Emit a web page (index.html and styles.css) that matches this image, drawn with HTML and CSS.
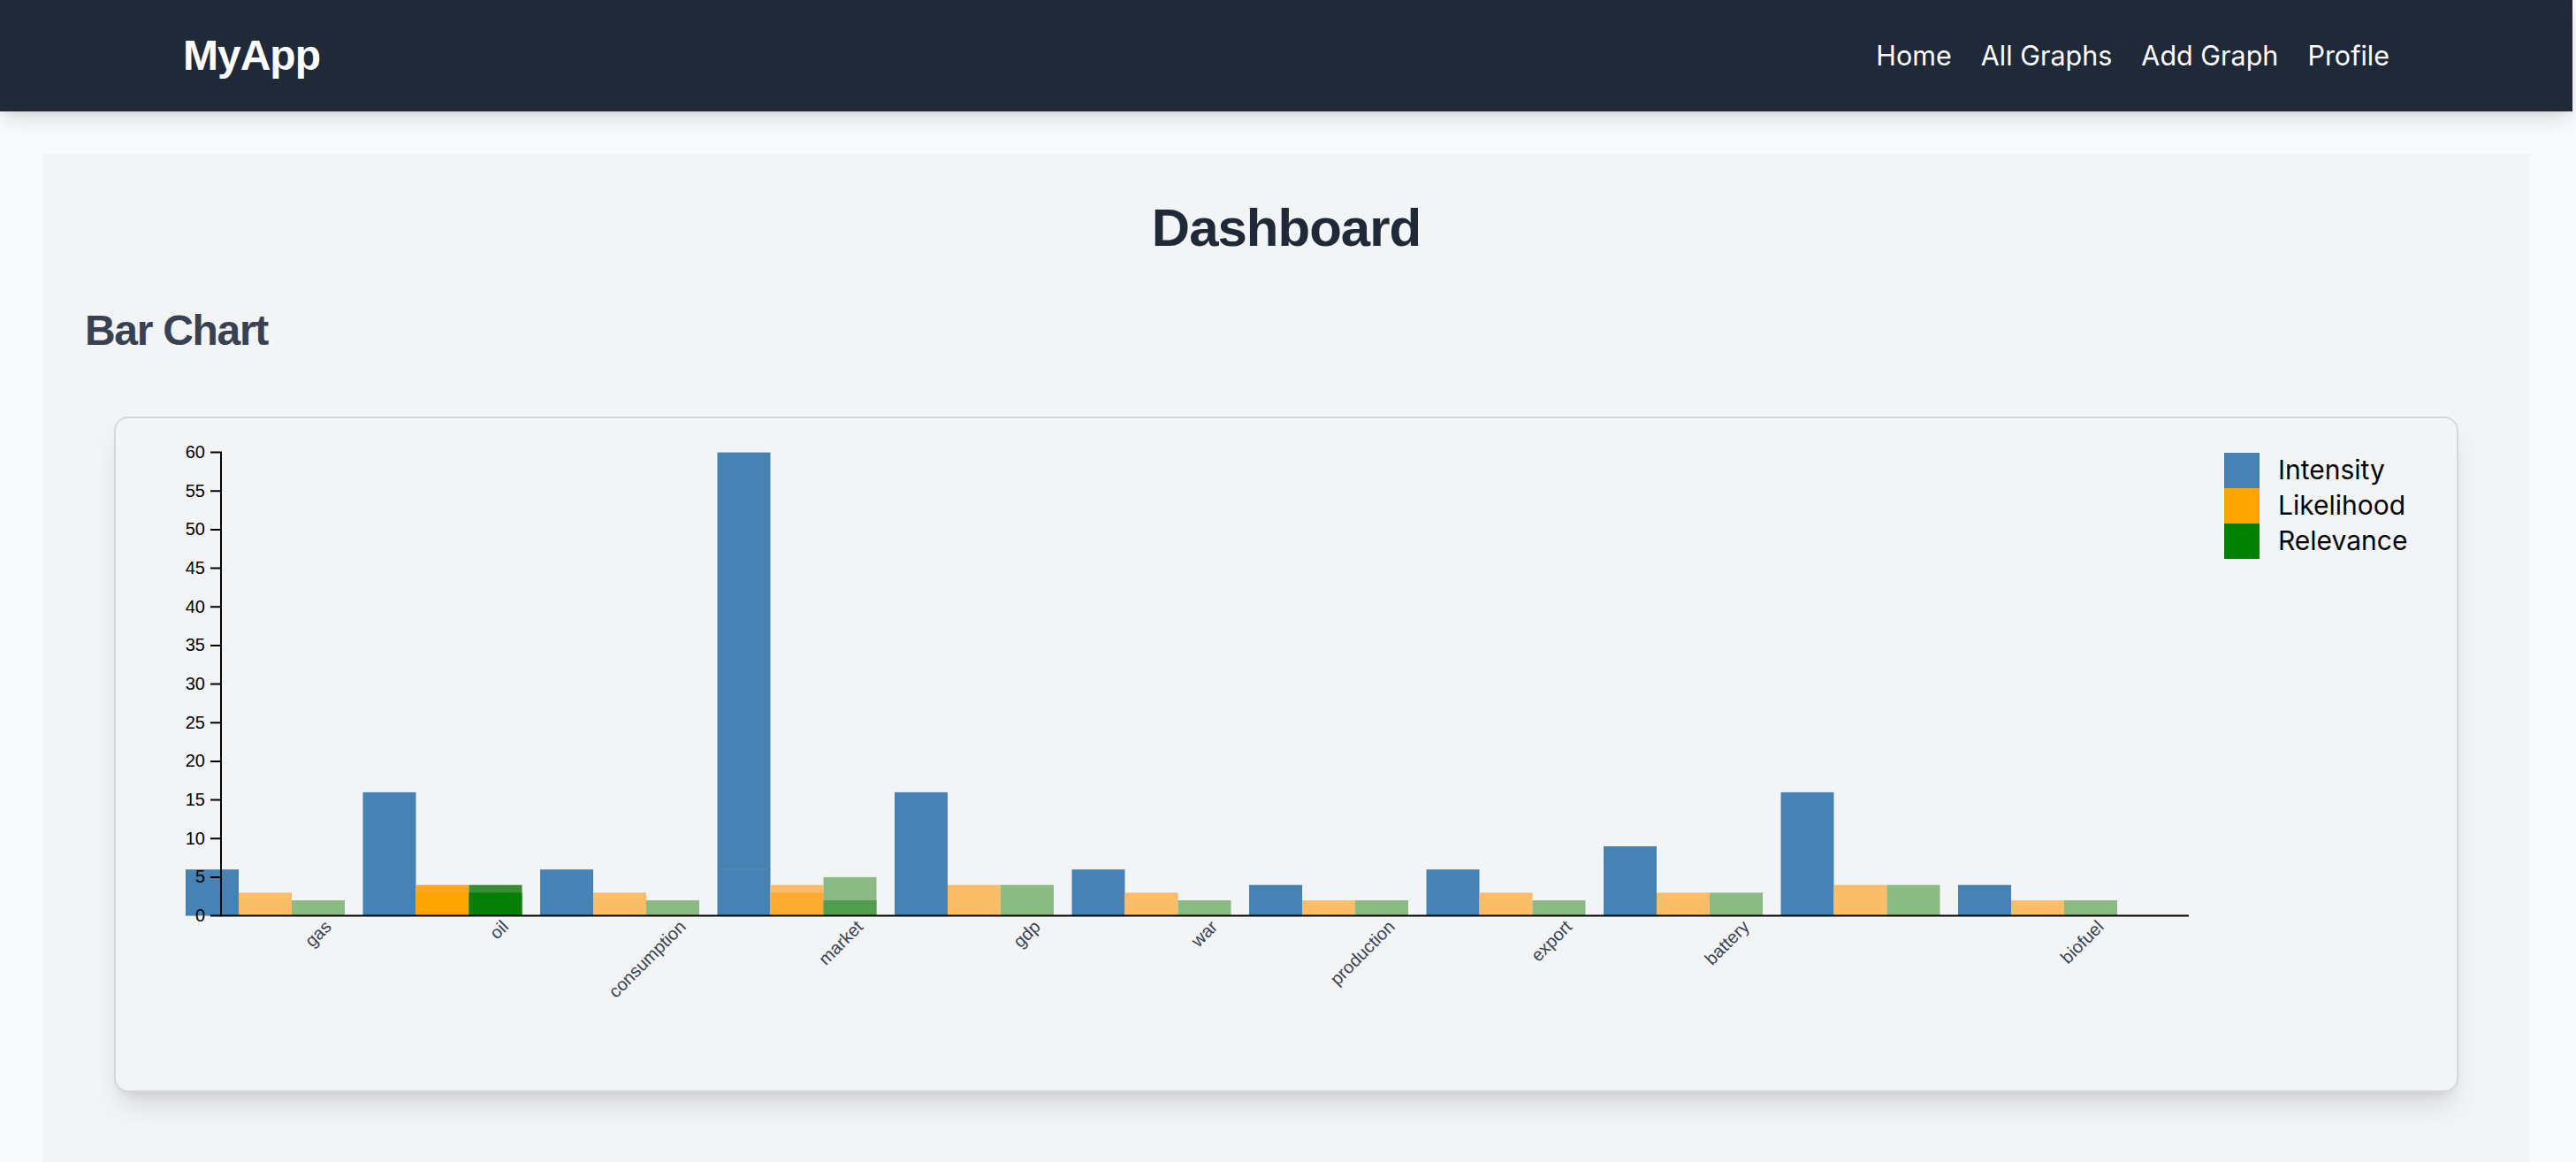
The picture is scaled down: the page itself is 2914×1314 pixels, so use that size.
FILE: index.html
```html
<!DOCTYPE html>
<html lang="en">
<head>
<meta charset="utf-8">
<title>MyApp - Dashboard</title>
<link rel="stylesheet" href="styles.css">
</head>
<body>
<nav class="navbar">
  <div class="nav-inner">
    <a class="brand" href="#">MyApp</a>
    <ul class="nav-links">
      <li><a href="#">Home</a></li>
      <li><a href="#">All Graphs</a></li>
      <li><a href="#">Add Graph</a></li>
      <li><a href="#">Profile</a></li>
    </ul>
  </div>
</nav>
<main class="dashboard">
  <h1 class="page-title">Dashboard</h1>
  <section class="chart-section">
    <h2 class="section-title">Bar Chart</h2>
    <div class="chart-card">
      <svg class="chart" width="2648" height="760" xmlns="http://www.w3.org/2000/svg">
        <g transform="translate(119,38.6)">
          <!-- gas -->
          <rect x="-40" y="471.6" width="60" height="52.4" fill="#4682b4"/>
          <rect x="20" y="497.8" width="60" height="26.2" fill="#fbbd68"/>
          <rect x="80" y="506.5" width="60" height="17.5" fill="#8cba85"/>
          <!-- oil -->
          <rect x="160.5" y="384.3" width="60" height="139.7" fill="#4682b4"/>
          <rect x="220.5" y="489.1" width="60" height="34.9" fill="#ffa81c"/>
          <rect x="220.5" y="497.8" width="60" height="26.2" fill="#ffa500"/>
          <rect x="280.5" y="489.1" width="60" height="34.9" fill="#3a8c35"/>
          <rect x="280.5" y="497.8" width="60" height="26.2" fill="#057f05"/>
          <!-- consumption -->
          <rect x="361" y="471.6" width="60" height="52.4" fill="#4682b4"/>
          <rect x="421" y="497.8" width="60" height="26.2" fill="#fbbd68"/>
          <rect x="481" y="506.5" width="60" height="17.5" fill="#8cba85"/>
          <!-- market -->
          <rect x="561.5" y="0" width="60" height="524" fill="#4682b4"/>
          <rect x="561.5" y="471.6" width="60" height="1" fill="#5089b9"/>
          <rect x="621.5" y="489.1" width="60" height="34.9" fill="#fbbd68"/>
          <rect x="621.5" y="497.8" width="60" height="26.2" fill="#ffab2f"/>
          <rect x="681.5" y="480.3" width="60" height="43.7" fill="#8cba85"/>
          <rect x="681.5" y="506.5" width="60" height="17.5" fill="#539d4f"/>
          <!-- gdp -->
          <rect x="762" y="384.3" width="60" height="139.7" fill="#4682b4"/>
          <rect x="822" y="489.1" width="60" height="34.9" fill="#fbbd68"/>
          <rect x="882" y="489.1" width="60" height="34.9" fill="#8cba85"/>
          <!-- war -->
          <rect x="962.5" y="471.6" width="60" height="52.4" fill="#4682b4"/>
          <rect x="1022.5" y="497.8" width="60" height="26.2" fill="#fbbd68"/>
          <rect x="1082.5" y="506.5" width="60" height="17.5" fill="#8cba85"/>
          <!-- production -->
          <rect x="1163" y="489.1" width="60" height="34.9" fill="#4682b4"/>
          <rect x="1223" y="506.5" width="60" height="17.5" fill="#fbbd68"/>
          <rect x="1283" y="506.5" width="60" height="17.5" fill="#8cba85"/>
          <!-- export -->
          <rect x="1363.5" y="471.6" width="60" height="52.4" fill="#4682b4"/>
          <rect x="1423.5" y="497.8" width="60" height="26.2" fill="#fbbd68"/>
          <rect x="1483.5" y="506.5" width="60" height="17.5" fill="#8cba85"/>
          <!-- battery -->
          <rect x="1564" y="445.4" width="60" height="78.6" fill="#4682b4"/>
          <rect x="1624" y="497.8" width="60" height="26.2" fill="#fbbd68"/>
          <rect x="1684" y="497.8" width="60" height="26.2" fill="#8cba85"/>
          <!-- (blank) -->
          <rect x="1764.5" y="384.3" width="60" height="139.7" fill="#4682b4"/>
          <rect x="1824.5" y="489.1" width="60" height="34.9" fill="#fbbd68"/>
          <rect x="1884.5" y="489.1" width="60" height="34.9" fill="#8cba85"/>
          <!-- biofuel -->
          <rect x="1965" y="489.1" width="60" height="34.9" fill="#4682b4"/>
          <rect x="2025" y="506.5" width="60" height="17.5" fill="#fbbd68"/>
          <rect x="2085" y="506.5" width="60" height="17.5" fill="#8cba85"/>

          <!-- x axis -->
          <g class="x-axis">
            <path d="M0,524 H2226" class="axis-line"/>
            <text class="x-label" transform="translate(126,537.6) rotate(-45)">gas</text>
            <text class="x-label" transform="translate(326.5,537.6) rotate(-45)">oil</text>
            <text class="x-label" transform="translate(527,537.6) rotate(-45)">consumption</text>
            <text class="x-label" transform="translate(727.5,537.6) rotate(-45)">market</text>
            <text class="x-label" transform="translate(928,537.6) rotate(-45)">gdp</text>
            <text class="x-label" transform="translate(1128.5,537.6) rotate(-45)">war</text>
            <text class="x-label" transform="translate(1329,537.6) rotate(-45)">production</text>
            <text class="x-label" transform="translate(1529.5,537.6) rotate(-45)">export</text>
            <text class="x-label" transform="translate(1730,537.6) rotate(-45)">battery</text>
            <text class="x-label" transform="translate(2131,537.6) rotate(-45)">biofuel</text>
          </g>

          <!-- y axis -->
          <g class="y-axis">
            <path d="M-12,0 H0 V524 H-12" class="axis-line"/>
            <path d="M-12,43.67 H0 M-12,87.33 H0 M-12,131 H0 M-12,174.67 H0 M-12,218.33 H0 M-12,262 H0 M-12,305.67 H0 M-12,349.33 H0 M-12,393 H0 M-12,436.67 H0 M-12,480.33 H0" class="axis-line"/>
            <text class="y-label" x="-18" y="524" dy="0.32em">0</text>
            <text class="y-label" x="-18" y="480.33" dy="0.32em">5</text>
            <text class="y-label" x="-18" y="436.67" dy="0.32em">10</text>
            <text class="y-label" x="-18" y="393" dy="0.32em">15</text>
            <text class="y-label" x="-18" y="349.33" dy="0.32em">20</text>
            <text class="y-label" x="-18" y="305.67" dy="0.32em">25</text>
            <text class="y-label" x="-18" y="262" dy="0.32em">30</text>
            <text class="y-label" x="-18" y="218.33" dy="0.32em">35</text>
            <text class="y-label" x="-18" y="174.67" dy="0.32em">40</text>
            <text class="y-label" x="-18" y="131" dy="0.32em">45</text>
            <text class="y-label" x="-18" y="87.33" dy="0.32em">50</text>
            <text class="y-label" x="-18" y="43.67" dy="0.32em">55</text>
            <text class="y-label" x="-18" y="0" dy="0.32em">60</text>
          </g>
        </g>

        <!-- legend -->
        <g class="legend">
          <rect x="2385" y="39" width="40" height="40" fill="#4682b4"/>
          <rect x="2385" y="79" width="40" height="40" fill="#ffa500"/>
          <rect x="2385" y="119" width="40" height="40" fill="#008000"/>
          <text class="legend-label" x="2446" y="69">Intensity</text>
          <text class="legend-label" x="2446" y="109">Likelihood</text>
          <text class="legend-label" x="2446" y="149">Relevance</text>
        </g>
      </svg>
    </div>
  </section>
</main>
</body>
</html>
```

FILE: styles.css
```css
* {
  box-sizing: border-box;
}

html {
  background: #f9fafb;
}

body {
  margin: 0;
  padding-right: 4px;
  background: #f9fafb;
  font-family: Inter, "Noto Sans", sans-serif;
  color: #111827;
}

/* ---------- navbar ---------- */
.navbar {
  position: relative;
  z-index: 1;
  background: #1f2937;
  height: 126px;
  box-shadow: 0 10px 24px -4px rgba(0, 0, 0, 0.14), 0 4px 8px -4px rgba(0, 0, 0, 0.1);
}

.nav-inner {
  max-width: 2560px;
  height: 100%;
  margin: 0 auto;
  padding: 0 32px;
  display: flex;
  align-items: center;
  justify-content: space-between;
}

.brand {
  font-family: "Liberation Sans", Arial, sans-serif;
  font-weight: 700;
  font-size: 48px;
  letter-spacing: -1px;
  line-height: 64px;
  color: #ffffff;
  text-decoration: none;
}

.nav-links {
  list-style: none;
  margin: 0;
  padding: 0;
  display: flex;
  gap: 33px;
}

.nav-links a {
  font-family: Inter, "Noto Sans", sans-serif;
  font-size: 30.5px;
  line-height: 48px;
  color: #ffffff;
  text-decoration: none;
}

/* ---------- main ---------- */
.dashboard {
  margin: 48px 48px 0;
  padding: 48px 48px 48px;
  background: #f3f4f6;
}

.page-title {
  margin: 0 0 48px;
  text-align: center;
  font-family: "Liberation Sans", Arial, sans-serif;
  font-weight: 700;
  font-size: 60px;
  letter-spacing: -1px;
  line-height: 72px;
  color: #1f2937;
}

.section-title {
  margin: 0;
  font-family: "Liberation Sans", Arial, sans-serif;
  font-weight: 700;
  font-size: 48px;
  letter-spacing: -1.3px;
  line-height: 64px;
  color: #374151;
}

.chart-card {
  margin: 65px 33px 32px;
  height: 764px;
  background: #f3f4f6;
  border: 2px solid #d5d7dd;
  border-radius: 16px;
  box-shadow: 0 20px 30px -6px rgba(0, 0, 0, 0.12), 0 8px 12px -8px rgba(0, 0, 0, 0.1);
  overflow: hidden;
}

.chart {
  display: block;
}

/* ---------- chart ---------- */
.axis-line {
  fill: none;
  stroke: #000000;
  stroke-width: 2;
}

.y-label {
  font-family: "Liberation Sans", Arial, sans-serif;
  font-size: 20px;
  fill: #000000;
  text-anchor: end;
}

.x-label {
  font-family: "Liberation Sans", Arial, sans-serif;
  font-size: 20px;
  fill: #374151;
  text-anchor: end;
}

.legend-label {
  font-family: Inter, "Noto Sans", sans-serif;
  font-size: 30px;
  fill: #000000;
}
```
